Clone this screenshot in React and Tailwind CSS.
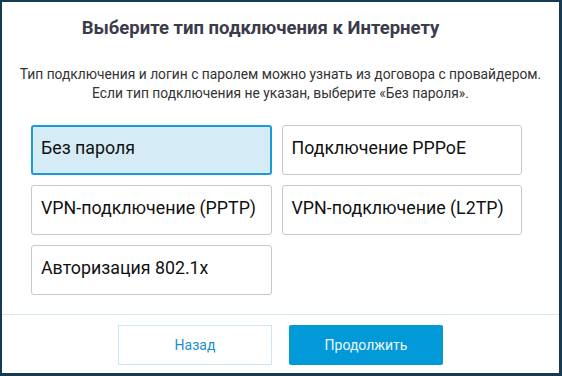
const options = [
  "Без пароля",
  "Подключение PPPoE",
  "VPN-подключение (PPTP)",
  "VPN-подключение (L2TP)",
  "Авторизация 802.1x",
];

export default function App() {
  const selected = 0;

  return (
    <div
      className="w-[562px] h-[376px] bg-white border-t-2 border-l-2 border-r-[3px] border-b-[3px] border-[#163a52] flex flex-col"
      style={{ fontFamily: "Roboto, 'Noto Sans', sans-serif" }}
    >
      {/* title */}
      <h1 className="pt-[13px] pr-[40px] text-center text-[18.5px] leading-[26px] font-bold text-[#3b3b4b]">
        Выберите тип подключения к Интернету
      </h1>

      {/* hint */}
      <p className="mt-[24px] text-center text-[13.8px] leading-[19px] text-[#333]">
        Тип подключения и логин с паролем можно узнать из договора с провайдером.
        <br />
        Если тип подключения не указан, выберите «Без пароля».
      </p>

      {/* options */}
      <div className="mt-[22px] ml-[29px] mr-[37px] grid grid-cols-2 gap-[10px]">
        {options.map((o, i) => (
          <button
            key={o}
            className={
              i === selected
                ? "h-[50px] rounded-[3px] border-2 border-[#1a9ad6] bg-[#d5ecf7] pl-[8px] text-left text-[17.8px] text-[#111] pb-[3px]"
                : "h-[50px] rounded-[3px] border border-[#c8c8c8] bg-white pl-[9px] text-left text-[17.8px] text-[#111] pb-[3px]"
            }
          >
            {o}
          </button>
        ))}
      </div>

      {/* footer */}
      <div className="mt-auto border-t border-[#d6e8f3] h-[59px] flex justify-center items-start pt-[10px] gap-[17px]">
        <button className="w-[154px] h-[40px] border border-[#cde6f3] text-[#1a8fcf] text-[14px]">
          Назад
        </button>
        <button className="w-[154px] h-[40px] rounded-[2px] bg-[#0299d9] text-[#eef7fc] text-[14px]">
          Продолжить
        </button>
      </div>
    </div>
  );
}
